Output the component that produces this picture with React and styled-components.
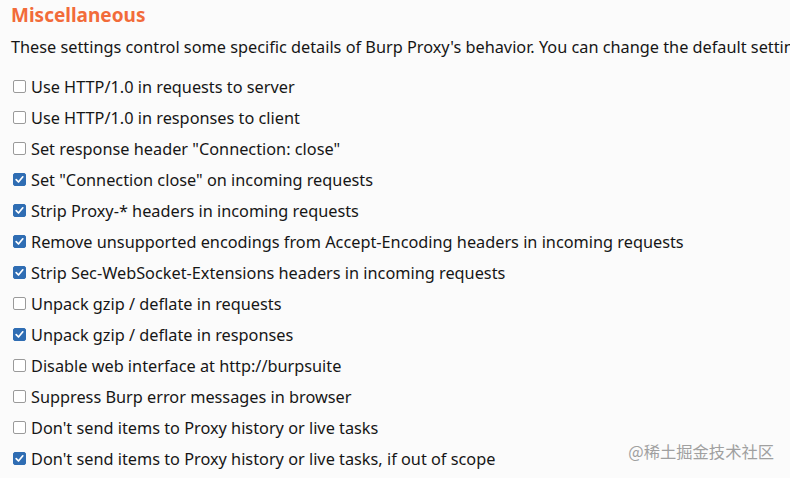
import React from "react";
import styled, { createGlobalStyle } from "styled-components";

const Global = createGlobalStyle`
  html, body { margin: 0; padding: 0; background: #fbfbfb; }
  body { font-family: "Noto Sans", "Open Sans", sans-serif; color: #161616; }
`;

const Page = styled.div`
  width: 790px;
  height: 478px;
  overflow: hidden;
  padding: 2px 0 0 11px;
  box-sizing: border-box;
  position: relative;
`;

const Title = styled.h2`
  margin: 0;
  font-size: 19px;
  font-weight: 700;
  color: #f26b3a;
  line-height: 26px;
`;

const Desc = styled.p`
  margin: 7px 0 12px;
  font-size: 16.3px;
  line-height: 24px;
  white-space: nowrap;
`;

const List = styled.div`
  display: flex;
  flex-direction: column;
  padding-left: 2px;
`;

const Row = styled.label`
  display: flex;
  align-items: center;
  gap: 5px;
  height: 31px;
  font-size: 16.3px;
  white-space: nowrap;
`;

const Box = styled.span`
  width: 13px;
  height: 13px;
  box-sizing: border-box;
  border-radius: 2px;
  border: 1px solid ${(p) => (p.$checked ? "#2f6db3" : "#9a9a9a")};
  background: ${(p) => (p.$checked ? "#2f6db3" : "#fff")};
  display: flex;
  align-items: center;
  justify-content: center;
  flex: none;
`;

const Watermark = styled.div`
  position: absolute;
  right: 16px;
  bottom: 15px;
  font-family: "Noto Sans CJK SC", sans-serif;
  font-size: 16.3px;
  color: #a0a0a0;
`;

const items = [
  ["Use HTTP/1.0 in requests to server", false],
  ["Use HTTP/1.0 in responses to client", false],
  ['Set response header "Connection: close"', false],
  ['Set "Connection close" on incoming requests', true],
  ["Strip Proxy-* headers in incoming requests", true],
  ["Remove unsupported encodings from Accept-Encoding headers in incoming requests", true],
  ["Strip Sec-WebSocket-Extensions headers in incoming requests", true],
  ["Unpack gzip / deflate in requests", false],
  ["Unpack gzip / deflate in responses", true],
  ["Disable web interface at http://burpsuite", false],
  ["Suppress Burp error messages in browser", false],
  ["Don't send items to Proxy history or live tasks", false],
  ["Don't send items to Proxy history or live tasks, if out of scope", true],
];

const Check = () => (
  <svg width="9" height="9" viewBox="0 0 9 9">
    <path d="M1.2 4.6 L3.5 7 L7.8 1.8" fill="none" stroke="#fff" strokeWidth="1.7" strokeLinecap="round" strokeLinejoin="round" />
  </svg>
);

export default function App() {
  return (
    <>
      <Global />
      <Page>
        <Title>Miscellaneous</Title>
        <Desc>
          These settings control some specific details of Burp Proxy's behavior. You can change the default settings here.
        </Desc>
        <List>
          {items.map(([t, c]) => (
            <Row key={t}>
              <Box $checked={c}>{c && <Check />}</Box>
              <span>{t}</span>
            </Row>
          ))}
        </List>
        <Watermark>@稀土掘金技术社区</Watermark>
      </Page>
    </>
  );
}
